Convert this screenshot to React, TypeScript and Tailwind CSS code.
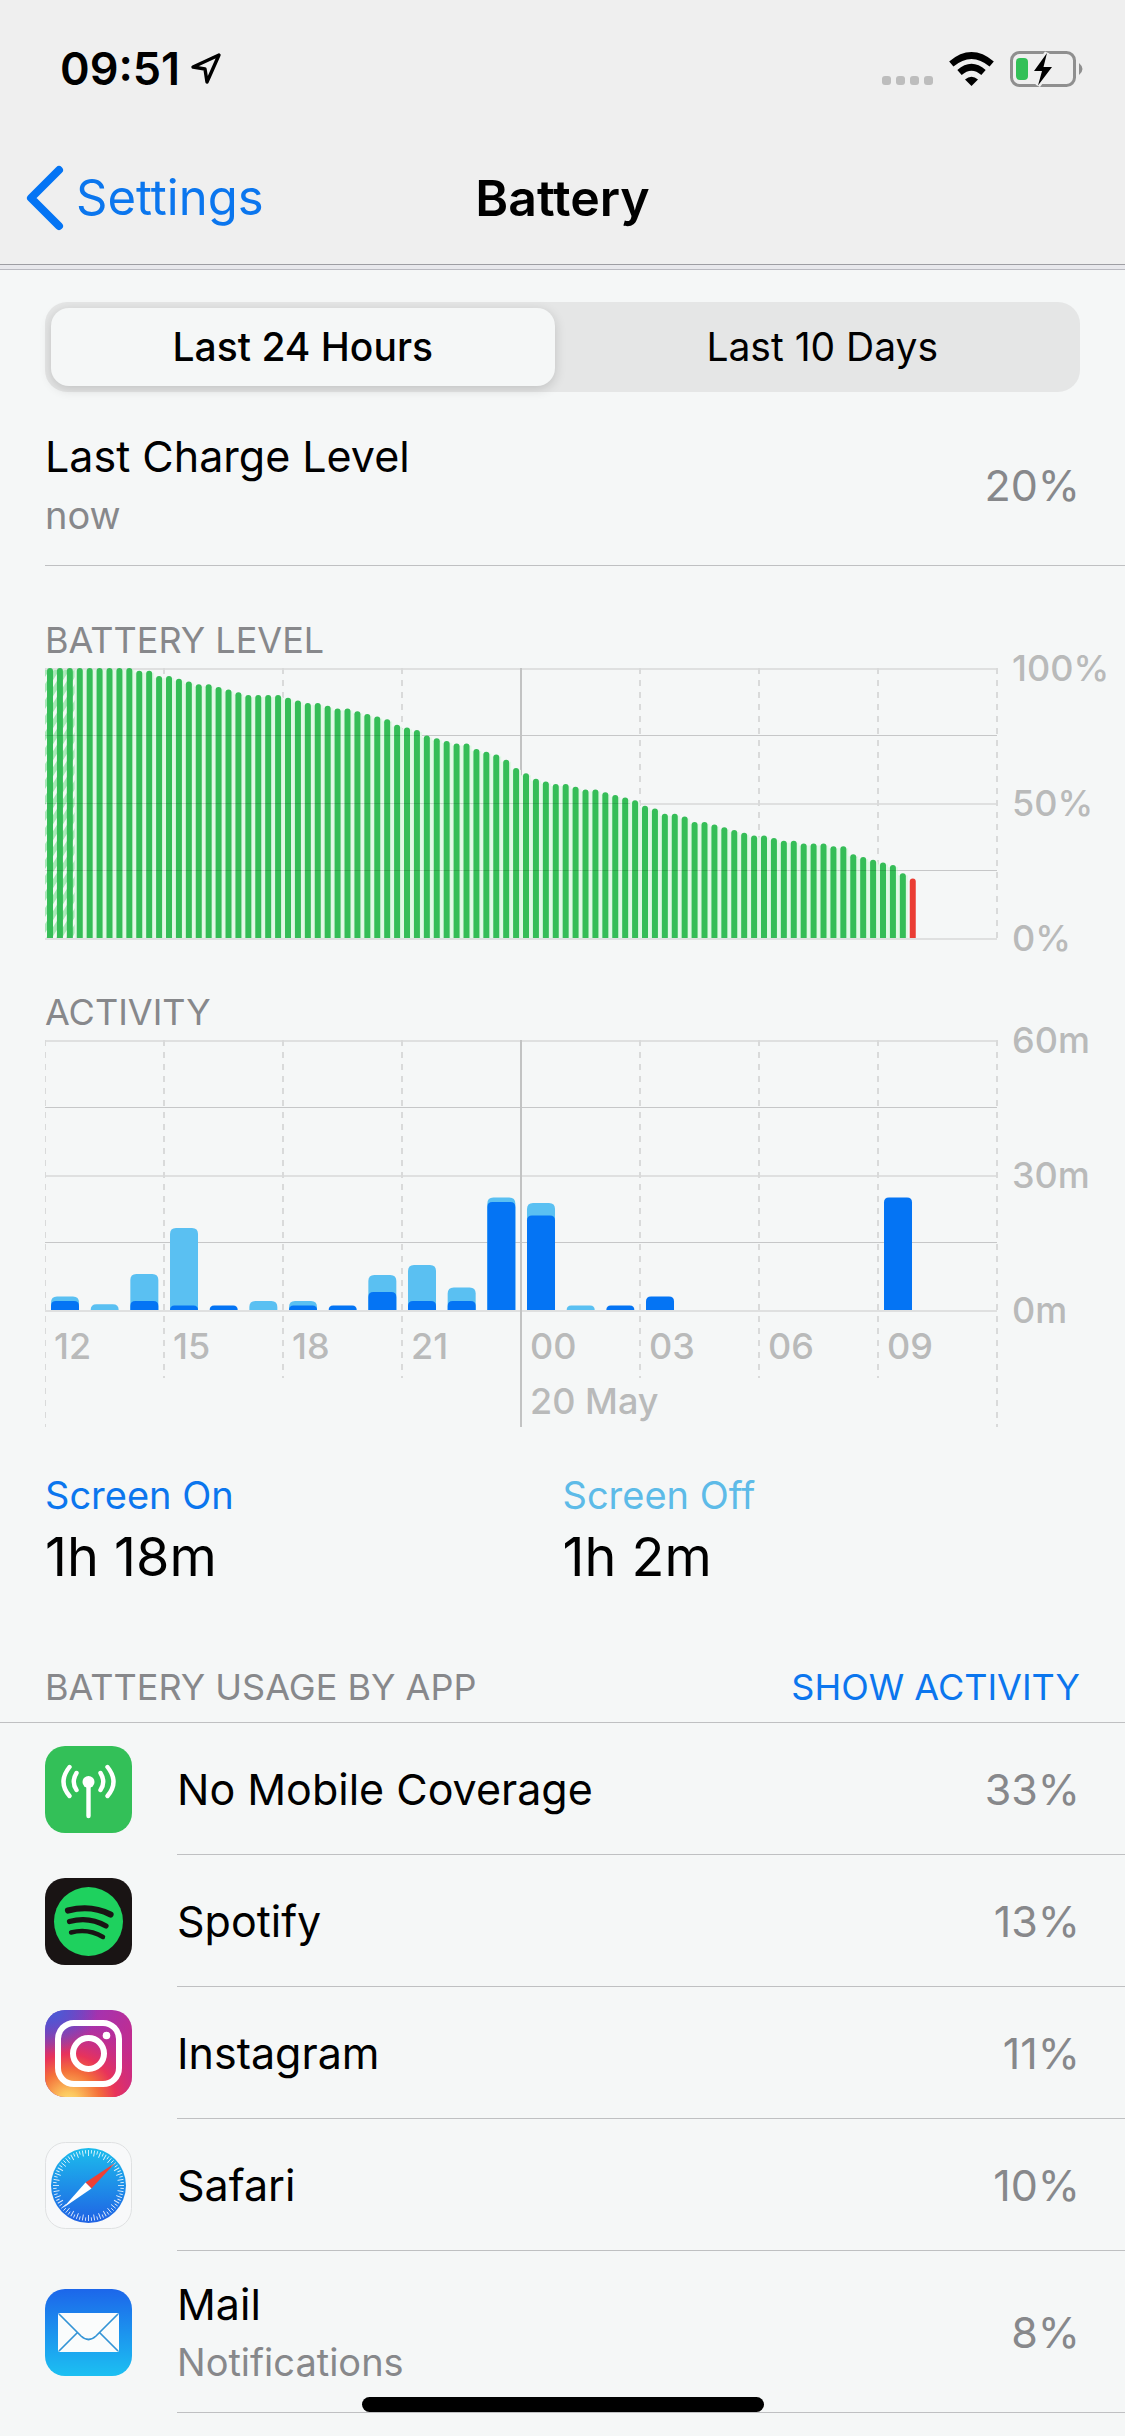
const levels = [
  100, 100, 100, 100, 100, 100, 100, 100, 100, 99, 99, 97, 97, 96, 95, 94, 94, 93, 92, 91, 90, 90, 90, 90,
  89, 88, 87, 87, 86, 85, 85, 84, 83, 82, 81, 79, 78, 77, 75, 74, 73, 72, 72, 70, 69, 68, 66, 63,
  61, 59, 58, 57, 57, 56, 55, 55, 54, 53, 52, 51, 49, 48, 46, 46, 45, 43, 43, 42, 41, 40, 39, 38,
  38, 37, 36, 36, 35, 35, 35, 34, 34, 31, 30, 29, 28, 27, 24, 22,
]

// minutes of [screen on, total] for each hour
const activity = [
  [2, 3], [0, 1.3], [2, 8], [1, 18.2], [1, 1], [0, 2], [1, 2], [1, 1],
  [4, 7.8], [2, 10], [2, 5], [24, 25], [21, 23.8], [0, 1], [1, 1], [3, 3],
  [0, 0], [0, 0], [0, 0], [0, 0], [0, 0], [25, 25],
]

const hours = ["12", "15", "18", "21", "00", "03", "06", "09"]

const CHART_W = 952
const CHART_H = 270
const STEP = CHART_W / 96
const HOUR = CHART_W / 24

function topRounded(x: number, w: number, h: number, r: number) {
  const rr = Math.min(r, h)
  const top = CHART_H - h
  return `M${x} ${CHART_H}V${top + rr}Q${x} ${top} ${x + rr} ${top}H${x + w - rr}Q${x + w} ${top} ${x + w} ${top + rr}V${CHART_H}Z`
}

function Grid({ tail = 0 }: { tail?: number }) {
  return (
    <g shapeRendering="crispEdges">
      {[0, 1, 2, 3, 4].map((i) => (
        <rect key={i} x={0} y={Math.floor(i * 67.5)} width={CHART_W} height={i % 2 ? 1 : 2} fill={i % 2 ? "#c6c7c8" : "#dfe0e0"} />
      ))}
      {[0, 1, 2, 3, 4, 5, 6, 7, 8].map((i) => {
        const edge = i === 0 || i === 8
        const bottom = CHART_H + (tail ? (edge || i === 4 ? tail : tail - 49) : 0)
        return (
          <line
            key={i}
            x1={i * 119}
            x2={i * 119}
            y1={0}
            y2={bottom}
            strokeWidth={i === 0 ? 1 : 2}
            stroke={i === 4 ? "#c2c3c3" : "#d9dada"}
            strokeDasharray={i === 4 ? undefined : "6 6"}
          />
        )
      })}
    </g>
  )
}

function LevelChart() {
  return (
    <svg viewBox="0 0 952 272" className="block w-full overflow-visible" role="img" aria-label="Battery level">
      <defs>
        <pattern id="hatch" width="10" height="16" patternUnits="userSpaceOnUse">
          <rect width="10" height="16" fill="#f1faf3" />
          <path d="M0 16L10 0V9L0 25ZM0 0L10 -16V-7L0 9Z" fill="#a6e8b5" />
        </pattern>
      </defs>
      <Grid />
      {levels.map((v, i) => (
        <rect
          key={`gap-${i}`}
          x={i * STEP}
          y={CHART_H - v * 2.7 + 2}
          width={i === 87 ? 0 : STEP}
          height={v * 2.7 - 2}
          fill={i < 3 ? "url(#hatch)" : "#dff8e4"}
        />
      ))}
      {levels.map((v, i) => (
        <path key={i} d={topRounded(i * STEP + 2, 6, v * 2.7, 3)} fill={i === 87 ? "#ea3d34" : "#35bd57"} />
      ))}
      <g fill="#000" fillOpacity="0.120" shapeRendering="crispEdges">
        <rect x="0" y="67" width={75 * 5} height="1" />
        <rect x="0" y="135" width={59 * STEP} height="1" />
        <rect x="0" y="202" width={86 * STEP} height="1" />
      </g>
    </svg>
  )
}

function ActivityChart() {
  return (
    <svg viewBox="0 0 952 388" className="block w-full overflow-visible" role="img" aria-label="Activity">
      <Grid tail={117} />
      {activity.map(([on, total], i) => (
        <g key={i}>
          {total > on && <path d={topRounded(i * HOUR + 6, 28, total * 4.5, 6)} fill="#5ac0f2" />}
          {on > 0 && <path d={topRounded(i * HOUR + 6, 28, on * 4.5, 5)} fill="#0474f4" />}
        </g>
      ))}
      <g fontSize="36" fontWeight="500" fill="#b9baba">
        {hours.map((h, i) => (
          <text key={h} x={i * 119 + 9} y={319}>{h}</text>
        ))}
        <text x={485} y={374}>20 May</text>
      </g>
    </svg>
  )
}

function AxisLabels({ labels }: { labels: string[] }) {
  return (
    <div className="-mt-5 flex h-[310px] flex-1 flex-col justify-between pl-[15px] text-[36px] leading-10 font-medium text-[#b9baba]">
      {labels.map((l) => (
        <span key={l}>{l}</span>
      ))}
    </div>
  )
}

function MobileIcon() {
  return (
    <svg viewBox="0 0 87 87" className="size-[87px]" aria-hidden="true">
      <rect width="87" height="87" rx="20" fill="#33c058" />
      <circle cx="43.500" cy="36" r="6" fill="#fff" />
      <g fill="none" stroke="#fff" strokeWidth="4.400" strokeLinecap="round">
        <path d="M43.500 37V70" />
        <path d="M31.500 27Q26 36 31.500 44M55.500 27Q61 36 55.500 44" />
        <path d="M24.500 21Q12.500 36 24.500 50M62.500 21Q74.500 36 62.500 50" />
      </g>
    </svg>
  )
}

function SpotifyIcon() {
  return (
    <svg viewBox="0 0 87 87" className="size-[87px]" aria-hidden="true">
      <rect width="87" height="87" rx="20" fill="#191414" />
      <circle cx="43.500" cy="43.500" r="34.500" fill="#1ed15e" />
      <g fill="none" stroke="#191414" strokeLinecap="round">
        <path d="M23 32.500Q46 26.500 65.500 36.500" strokeWidth="6.200" />
        <path d="M24.500 43.500Q44 38 61 48" strokeWidth="5.200" />
        <path d="M26 54.500Q43 50 58 59" strokeWidth="4.400" />
      </g>
    </svg>
  )
}

function InstagramIcon() {
  return (
    <svg viewBox="0 0 87 87" className="size-[87px]" aria-hidden="true">
      <defs>
        <linearGradient id="ig-base" x1="0" y1="0" x2="1" y2="0.600">
          <stop offset="0" stopColor="#6a3fc4" />
          <stop offset="0.500" stopColor="#a832ac" />
          <stop offset="1" stopColor="#c92b86" />
        </linearGradient>
        <radialGradient id="ig-blue" cx="0.100" cy="0" r="0.500">
          <stop offset="0" stopColor="#4a5bd6" />
          <stop offset="1" stopColor="#4a5bd6" stopOpacity="0" />
        </radialGradient>
        <radialGradient id="ig-warm" cx="0.270" cy="1.060" r="0.950">
          <stop offset="0" stopColor="#fddc78" />
          <stop offset="0.120" stopColor="#fcc65e" />
          <stop offset="0.380" stopColor="#f4703a" />
          <stop offset="0.580" stopColor="#e8335a" />
          <stop offset="1" stopColor="#c92b86" stopOpacity="0" />
        </radialGradient>
      </defs>
      <rect width="87" height="87" rx="20" fill="url(#ig-base)" />
      <rect width="87" height="87" rx="20" fill="url(#ig-warm)" />
      <rect width="87" height="87" rx="20" fill="url(#ig-blue)" />
      <g fill="none" stroke="#fff" strokeWidth="6">
        <rect x="13" y="13" width="61" height="61" rx="16" />
        <circle cx="43.500" cy="43.500" r="15.500" />
      </g>
      <circle cx="61.500" cy="25.500" r="3.800" fill="#fff" />
    </svg>
  )
}

function SafariIcon() {
  return (
    <svg viewBox="0 0 87 87" className="size-[87px]" aria-hidden="true">
      <defs>
        <linearGradient id="safari" x1="0" y1="0" x2="0" y2="1">
          <stop offset="0" stopColor="#1cbcec" />
          <stop offset="1" stopColor="#2062e4" />
        </linearGradient>
      </defs>
      <rect x="0.500" y="0.500" width="86" height="86" rx="20" fill="#f8f9fa" stroke="#dfe1e2" />
      <circle cx="43.500" cy="43.500" r="37.500" fill="url(#safari)" />
      {Array.from({ length: 72 }, (_, i) => (
        <line
          key={i}
          x1="43.500"
          x2="43.500"
          y1="8"
          y2={i % 2 ? 11.5 : 14}
          stroke="#fff"
          strokeWidth="0.900"
          strokeOpacity="0.850"
          transform={`rotate(${i * 5} 43.5 43.5)`}
        />
      ))}
      <path d="M70 21L40.500 40.500L46.500 46.500Z" fill="#ee4035" />
      <path d="M18 66L40.500 40.500L46.500 46.500Z" fill="#fff" />
    </svg>
  )
}

function MailIcon() {
  return (
    <svg viewBox="0 0 87 87" className="size-[87px]" aria-hidden="true">
      <defs>
        <linearGradient id="mail" x1="0" y1="0" x2="0" y2="1">
          <stop offset="0" stopColor="#1c66ea" />
          <stop offset="1" stopColor="#1cc0f2" />
        </linearGradient>
      </defs>
      <rect width="87" height="87" rx="20" fill="url(#mail)" />
      <rect x="13" y="24" width="61" height="39" rx="2" fill="#fafcfc" />
      <g fill="none" stroke="#3394d6" strokeWidth="1.700">
        <path d="M14 25L36 47Q43.500 54 51 47L73 25" />
        <path d="M14 62L32.500 43.500M73 62L54.500 43.500" />
      </g>
    </svg>
  )
}

const apps = [
  { name: "No Mobile Coverage", usage: 33, icon: <MobileIcon /> },
  { name: "Spotify", usage: 13, icon: <SpotifyIcon /> },
  { name: "Instagram", usage: 11, icon: <InstagramIcon /> },
  { name: "Safari", usage: 10, icon: <SafariIcon /> },
  { name: "Mail", note: "Notifications", usage: 8, icon: <MailIcon /> },
]

function StatusBar() {
  return (
    <div className="flex h-[132px] items-center justify-between pt-[5px] pr-[42px] pl-[60px]">
      <div className="flex items-center gap-[10px]">
        <span className="text-[45px] leading-[52px] font-semibold">09:51</span>
        <svg width="32" height="34" viewBox="0 0 32 34" aria-label="Location in use">
          <path d="M29 3L3 15L15 17L17 30Z" fill="none" stroke="#000" strokeWidth="3.400" strokeLinejoin="round" />
        </svg>
      </div>
      <div className="flex items-center gap-4">
        <div className="mt-6 flex gap-[5px]">
          {[0, 1, 2, 3].map((i) => (
            <span key={i} className="size-[9px] rounded-[3px] bg-[#bdbdbd]" />
          ))}
        </div>
        <svg width="45" height="34" viewBox="0 0 45 34" aria-label="Wi-Fi">
          <g fill="none" stroke="#000" strokeWidth="6.600">
            <path d="M2.300 12Q22.500 -5 42.700 12" />
            <path d="M10.500 20.500Q22.500 10 34.500 20.500" />
          </g>
          <path d="M16 27.500Q22.500 22 29 27.500L22.500 34Z" />
        </svg>
        <svg width="73" height="36" viewBox="0 0 73 36" aria-label="Battery charging">
          <rect x="1.500" y="1.500" width="63" height="33" rx="8" fill="none" stroke="#8f8f8f" strokeWidth="3" />
          <path d="M69 12Q76 18 69 24Z" fill="#8f8f8f" />
          <rect x="6" y="7" width="12" height="22" rx="4" fill="#33c058" />
          <path d="M37 2L24 20H32L28 34.500L42 16H33.500Z" stroke="#efefef" strokeWidth="5" />
          <path d="M37 2L24 20H32L28 34.500L42 16H33.500Z" />
        </svg>
      </div>
    </div>
  )
}

export default function App() {
  return (
    <div className="relative min-h-screen bg-[#f5f7f7] font-[Inter,'Liberation_Sans',sans-serif] text-black">
      <header className="h-[265px] border-b border-[#9e9ea3] bg-[#efefef]">
        <StatusBar />
        <div className="grid h-[132px] grid-cols-3 items-center">
          <a href="#settings" className="flex items-center gap-3 pl-[26px] text-[49px] leading-[60px] text-[#0b76ee]">
            <svg width="38" height="66" viewBox="0 0 38 66" aria-hidden="true">
              <path d="M33 5L5 33L33 61" fill="none" stroke="#0474f4" strokeWidth="8" strokeLinecap="round" strokeLinejoin="round" />
            </svg>
            Settings
          </a>
          <h1 className="text-center text-[50px] leading-[60px] font-semibold">Battery</h1>
        </div>
      </header>
      <div className="h-[5px] border-b border-[#b9b9c0] bg-[#e8e8ec]" />

      <main>
        <div className="mx-[45px] mt-8 grid h-[90px] grid-cols-2 gap-4 rounded-[22px] bg-[#e5e6e6] p-[6px] text-[39px]">
          <button type="button" className="rounded-[18px] bg-[#f5f7f7] font-medium shadow-[0_3px_12px_rgba(0,0,0,0.16)]">Last 24 Hours</button>
          <button type="button">Last 10 Days</button>
        </div>

        <section className="ml-[45px] flex h-[174px] items-center justify-between border-b border-[#bfc0c2] pt-3 pr-[45px]">
          <div>
            <p className="text-[43px] leading-[60px]">Last Charge Level</p>
            <p className="text-[38px] leading-[58px] text-[#87888b]">now</p>
          </div>
          <span className="text-[43px] leading-[60px] text-[#87888b]">20%</span>
        </section>

        <section className="pt-12 pl-[45px]">
          <h2 className="pb-[2px] text-[36px] leading-[52px] text-[#87888b]">BATTERY LEVEL</h2>
          <div className="flex">
            <div className="w-[88.15%]">
              <LevelChart />
            </div>
            <AxisLabels labels={["100%", "50%", "0%"]} />
          </div>
        </section>

        <section className="pt-7 pl-[45px]">
          <h2 className="pb-[2px] text-[36px] leading-[52px] text-[#87888b]">ACTIVITY</h2>
          <div className="flex">
            <div className="w-[88.15%]">
              <ActivityChart />
            </div>
            <AxisLabels labels={["60m", "30m", "0m"]} />
          </div>
        </section>

        <section className="mx-[45px] grid grid-cols-2 pt-[43px]">
          <div>
            <p className="text-[38px] leading-[48px] text-[#0b76ee]">Screen On</p>
            <p className="text-[54px] leading-[76px]">1h 18m</p>
          </div>
          <div>
            <p className="text-[38px] leading-[48px] text-[#5dbbe8]">Screen Off</p>
            <p className="text-[54px] leading-[76px]">1h 2m</p>
          </div>
        </section>

        <div className="mt-14 flex h-[72px] justify-between border-b border-[#bfc0c2] px-[45px] text-[36px] leading-[72px]">
          <h2 className="text-[#87888b]">BATTERY USAGE BY APP</h2>
          <button type="button" className="text-[#0b76ee]">SHOW ACTIVITY</button>
        </div>
        <ul>
          {apps.map((app) => (
            <li key={app.name} className="flex items-center pl-[45px]">
              {app.icon}
              <div className={`ml-[45px] flex flex-1 items-center justify-between border-b border-[#bfc0c2] pr-[45px] ${app.note ? "h-[162px]" : "h-[132px]"}`}>
                <div>
                  <p className="text-[43px] leading-[60px]">{app.name}</p>
                  {app.note && <p className="text-[38px] leading-[56px] text-[#87888b]">{app.note}</p>}
                </div>
                <span className="text-[43px] leading-[60px] text-[#87888b]">{app.usage}%</span>
              </div>
            </li>
          ))}
        </ul>
      </main>

      <div className="absolute inset-x-0 bottom-6 mx-auto h-[15px] w-[402px] rounded-full bg-black" />
    </div>
  )
}
